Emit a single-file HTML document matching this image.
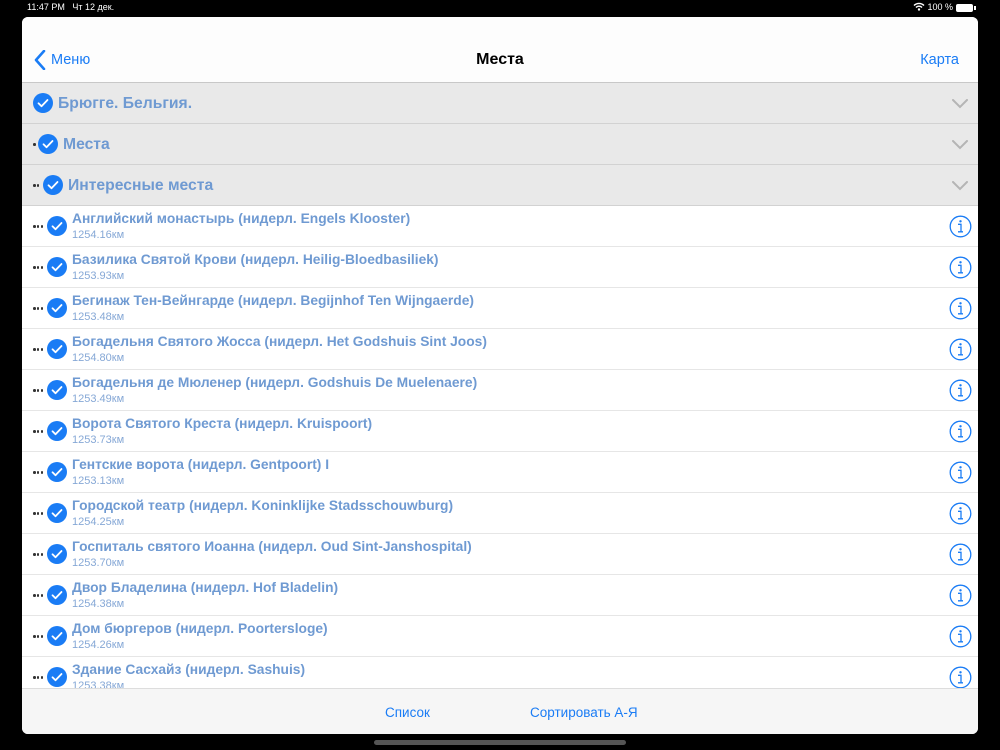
<!DOCTYPE html>
<html><head><meta charset="utf-8"><style>
*{margin:0;padding:0;box-sizing:border-box}
body{width:1000px;height:750px;background:#000;position:relative;overflow:hidden;font-family:"Liberation Sans",sans-serif}
.sb{position:absolute;top:2px;font-size:9px;color:#fff}
.panel{position:absolute;left:22px;top:17px;width:956px;height:717px;background:#fff;border-radius:6px;overflow:hidden}
.nav{position:absolute;left:0;top:0;width:956px;height:66px;background:#fdfdfd;border-bottom:1px solid #c8c8c8}
.nav .t{position:absolute;left:0;width:956px;top:34px;text-align:center;font-size:16px;font-weight:bold;color:#000}
.blue{color:#1a7cf5}
.hdr{position:absolute;left:0;width:956px;height:41px;background:#e9e9e9;border-bottom:1px solid #d2d2d2}
.hdr .l{position:absolute;top:12px;font-size:15.7px;font-weight:bold;color:#6f9ad2}
.chk{position:absolute;width:20px;height:20px;border-radius:50%;background:#1a7cf5}
.chk svg{position:absolute;left:0;top:0}
.dots{position:absolute;height:3px}
.dots i{display:inline-block;width:2.5px;height:2.5px;border-radius:50%;background:#333;margin-right:1.3px;vertical-align:top}
.chev{position:absolute;right:10px;top:16px}
.row{position:absolute;left:0;width:956px;height:41px;border-bottom:1px solid #e6e6e6;background:#fff}
.row .n{position:absolute;left:50px;top:5px;font-size:13.8px;font-weight:bold;color:#6f9ad2;white-space:nowrap}
.row .d{position:absolute;left:50px;top:23px;font-size:11px;color:#86a8d6}
.info{position:absolute;right:6px;top:9px}
.tb{position:absolute;left:0;top:671px;width:956px;height:46px;background:#f6f6f6;border-top:1px solid #ddd}
.tb span{position:absolute;top:16px;font-size:13.5px;color:#1a7cf5}
</style></head><body>
<div class="sb" style="left:27px">11:47 PM&nbsp;&nbsp;&nbsp;Чт 12 дек.</div>
<div class="sb" style="left:913px">
<svg width="12" height="9" viewBox="0 0 12 9" style="vertical-align:-1px"><path d="M1 3.5a7 7 0 0 1 10 0M3 5.5a4 4 0 0 1 6 0" stroke="#fff" stroke-width="1.4" fill="none"/><circle cx="6" cy="7.5" r="1.2" fill="#fff"/></svg> 100 %</div>
<div style="position:absolute;left:956px;top:4px;width:17px;height:8px;border:1px solid #fff;border-radius:2px;background:#fff"></div>
<div style="position:absolute;left:974px;top:6px;width:2px;height:4px;background:#fff"></div>
<div class="panel">
<div class="nav">
<svg style="position:absolute;left:12px;top:33px" width="12" height="20" viewBox="0 0 12 20"><path d="M10 1L2 10l8 9" stroke="#1a7cf5" stroke-width="2.6" fill="none" stroke-linecap="round" stroke-linejoin="round"/></svg>
<div class="blue" style="position:absolute;left:29px;top:35px;font-size:14.5px">Меню</div>
<div class="t">Места</div>
<div class="blue" style="position:absolute;right:19px;top:35px;font-size:14.5px">Карта</div>
</div>
<div id="c"></div>
<div class="tb"><span style="left:363px">Список</span><span style="left:508px">Сортировать А-Я</span></div>
</div>
<div style="position:absolute;left:374px;top:740px;width:252px;height:5px;border-radius:3px;background:#555"></div>
<script>
var ck='<svg width="20" height="20" viewBox="0 0 20 20"><path d="M5.5 10.3l3 3 6-6.3" stroke="#fff" stroke-width="1.8" fill="none" stroke-linecap="round" stroke-linejoin="round"/></svg>';
var chev='<svg class="chev" width="16" height="10" viewBox="0 0 16 10"><path d="M1 1l7 7 7-7" stroke="#b5b5b5" stroke-width="2" fill="none" stroke-linecap="round"/></svg>';
function d(n){var s='';for(var i=0;i<n;i++)s+='<i></i>';return s;}
var h='';
var hd=[["Брюгге. Бельгия.",0,0],["Места",5,1],["Интересные места",10,2]];
hd.forEach(function(x,i){var t=66+i*41;
h+='<div class="hdr" style="top:'+t+'px"><div class="dots" style="left:11px;top:19px">'+d(x[2])+'</div><div class="chk" style="left:'+(11+x[1])+'px;top:10px">'+ck+'</div><div class="l" style="left:'+(36+x[1])+'px">'+x[0]+'</div>'+chev+'</div>';});
var it=[["Английский монастырь (нидерл. Engels Klooster)","1254.16км"],["Базилика Святой Крови (нидерл. Heilig-Bloedbasiliek)","1253.93км"],["Бегинаж Тен-Вейнгарде (нидерл. Begijnhof Ten Wijngaerde)","1253.48км"],["Богадельня Святого Жосса (нидерл. Het Godshuis Sint Joos)","1254.80км"],["Богадельня де Мюленер (нидерл. Godshuis De Muelenaere)","1253.49км"],["Ворота Святого Креста (нидерл. Kruispoort)","1253.73км"],["Гентские ворота (нидерл. Gentpoort)  I","1253.13км"],["Городской театр (нидерл. Koninklijke Stadsschouwburg)","1254.25км"],["Госпиталь святого Иоанна (нидерл. Oud Sint-Janshospital)","1253.70км"],["Двор Бладелина (нидерл. Hof Bladelin)","1254.38км"],["Дом бюргеров (нидерл. Poortersloge)","1254.26км"],["Здание Сасхайз (нидерл. Sashuis)","1253.38км"]];
var inf='<svg class="info" width="23" height="23" viewBox="0 0 23 23"><circle cx="11.5" cy="11.5" r="10.3" stroke="#1a7cf5" stroke-width="1.3" fill="none"/><circle cx="11.5" cy="6.3" r="1.2" fill="#1a7cf5"/><path d="M9 9.3h3v7.5M9 16.8h5" stroke="#1a7cf5" stroke-width="1.3" fill="none"/></svg>';
it.forEach(function(x,i){var t=189+i*41;
h+='<div class="row" style="top:'+t+'px"><div class="dots" style="left:11px;top:19px">'+d(3)+'</div><div class="chk" style="left:25px;top:10px">'+ck+'</div><div class="n">'+x[0]+'</div><div class="d">'+x[1]+'</div>'+inf+'</div>';});
document.getElementById('c').innerHTML=h;
</script>
</body></html>
